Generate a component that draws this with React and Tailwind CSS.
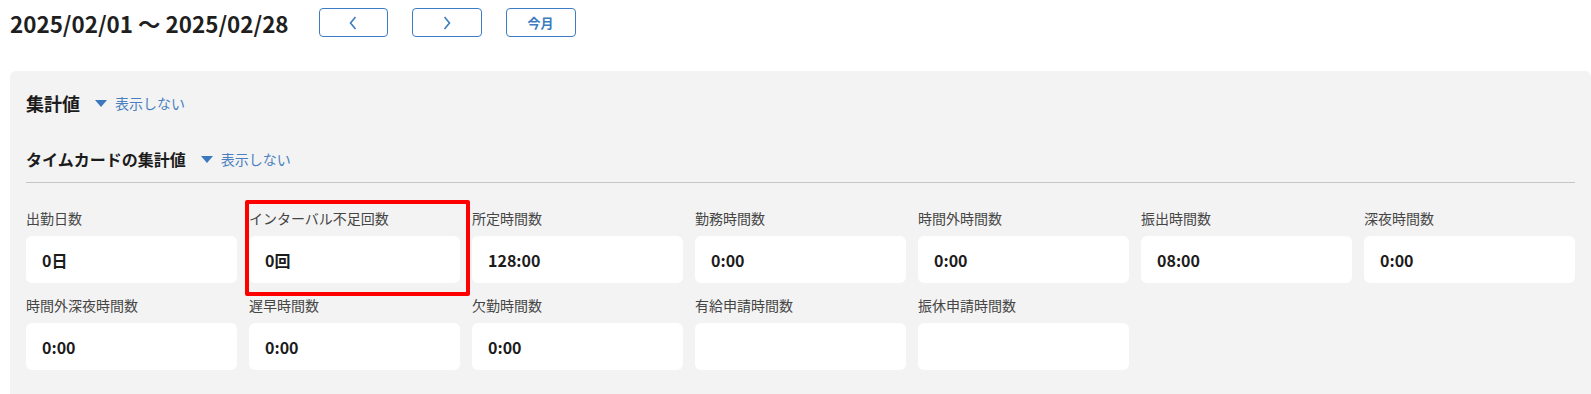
import React from "react";

const row1 = [
  { label: "出勤日数", value: "0日" },
  { label: "インターバル不足回数", value: "0回", marked: true },
  { label: "所定時間数", value: "128:00" },
  { label: "勤務時間数", value: "0:00" },
  { label: "時間外時間数", value: "0:00" },
  { label: "振出時間数", value: "08:00" },
  { label: "深夜時間数", value: "0:00" },
];
const row2 = [
  { label: "時間外深夜時間数", value: "0:00" },
  { label: "遅早時間数", value: "0:00" },
  { label: "欠勤時間数", value: "0:00" },
  { label: "有給申請時間数", value: "" },
  { label: "振休申請時間数", value: "" },
];

function Triangle() {
  return (
    <svg width="12" height="7" viewBox="0 0 12 7" className="shrink-0">
      <path d="M0 0 H12 L6 7 Z" fill="#3a78bf" />
    </svg>
  );
}

function Cell({ label, value, marked }) {
  return (
    <div className="relative flex flex-col">
      <div className="h-5 text-[14px] leading-5 text-[#454545] whitespace-nowrap">{label}</div>
      <div className="mt-2 h-[47px] rounded-md bg-white flex items-center px-4 text-[16px] font-bold text-[#1b1b1b]">
        {value}
      </div>
      {marked && (
        <div className="absolute left-[-4px] right-[-10px] top-[-8px] bottom-[-13px] border-4 border-[#ff0000] rounded-[2px] pointer-events-none" />
      )}
    </div>
  );
}

export default function App() {
  return (
    <div
      className="w-[1591px] h-[394px] overflow-hidden bg-white pl-[10px]"
      style={{ fontFamily: '"Noto Sans CJK JP", "Noto Sans", sans-serif' }}
    >
      <div className="h-[45px] flex items-center">
        <div className="text-[22.4px] font-bold text-[#1f1f1f] leading-8 whitespace-nowrap">
          2025/02/01 〜 2025/02/28
        </div>
        <div className="ml-[30px] flex items-center gap-6">
          <button className="w-[69px] h-[29px] border border-[#3c7cc2] rounded-[4px] flex items-center justify-center bg-white">
            <svg width="10" height="14" viewBox="0 0 10 14">
              <path d="M7.5 1 L2.5 7 L7.5 13" fill="none" stroke="#3c7cc2" strokeWidth="1.6" />
            </svg>
          </button>
          <button className="w-[70px] h-[29px] border border-[#3c7cc2] rounded-[4px] flex items-center justify-center bg-white">
            <svg width="10" height="14" viewBox="0 0 10 14">
              <path d="M2.5 1 L7.5 7 L2.5 13" fill="none" stroke="#3c7cc2" strokeWidth="1.6" />
            </svg>
          </button>
          <button className="w-[70px] h-[29px] border border-[#3c7cc2] rounded-[4px] flex items-center justify-center bg-white text-[13px] font-bold text-[#3c7cc2]">
            今月
          </button>
        </div>
      </div>

      <div className="mt-[26px] rounded-t-md bg-[#f3f3f3] px-4 pt-5 pb-8">
        <div className="h-6 flex items-center">
          <span className="text-[18px] font-bold text-[#1b1b1b]">集計値</span>
          <span className="ml-[15px] flex items-center gap-2 text-[14px] text-[#4a80c0]">
            <Triangle />
            表示しない
          </span>
        </div>
        <div className="mt-8 h-6 flex items-center">
          <span className="text-[16px] font-bold text-[#1b1b1b]">タイムカードの集計値</span>
          <span className="ml-[15px] flex items-center gap-2 text-[14px] text-[#4a80c0]">
            <Triangle />
            表示しない
          </span>
        </div>
        <div className="mt-[11px] border-b border-[#c6c6c6]" />

        <div className="mt-[25px] grid grid-cols-7 gap-x-3 gap-y-3">
          {row1.map((c) => (
            <Cell key={c.label} {...c} />
          ))}
          {row2.map((c) => (
            <Cell key={c.label} {...c} />
          ))}
        </div>
      </div>
    </div>
  );
}
